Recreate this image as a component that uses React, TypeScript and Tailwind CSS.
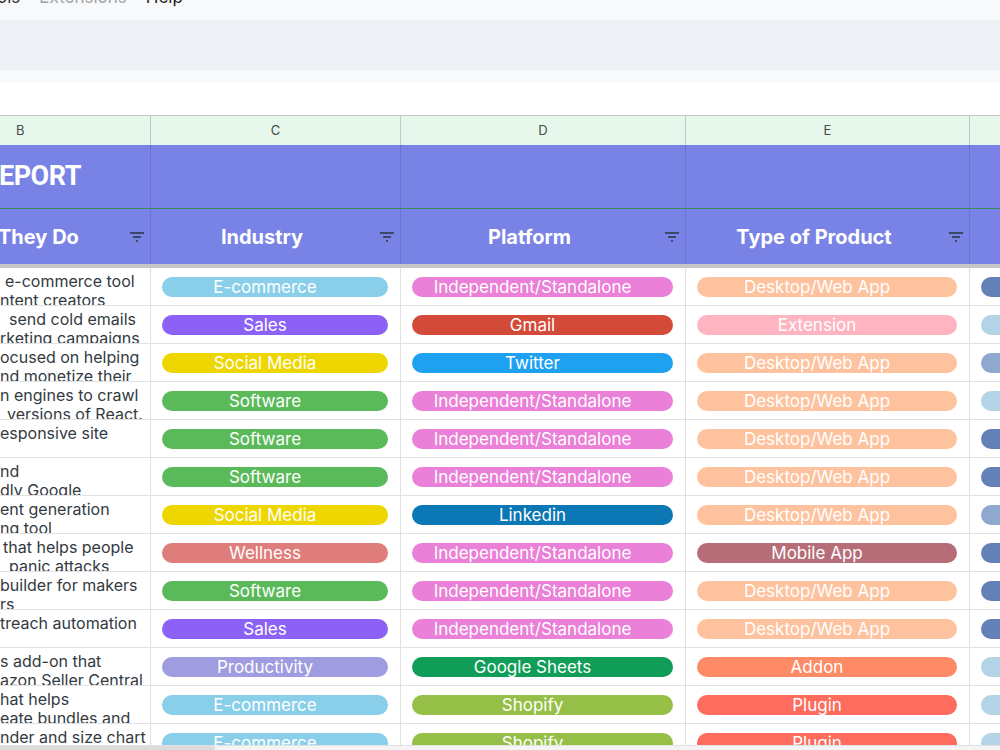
import React from "react";

type Row = {
  l1: string;
  m1: string;
  l2: string;
  m2: string;
  ind: [string, string];
  plat: [string, string];
  type: [string, string];
  f: string;
};

const ECOM: [string, string] = ["E-commerce", "bg-[#89cfea]"];
const SALES: [string, string] = ["Sales", "bg-[#8c62f6]"];
const SOCIAL: [string, string] = ["Social Media", "bg-[#eed600]"];
const SOFT: [string, string] = ["Software", "bg-[#5aba5a]"];
const WELL: [string, string] = ["Wellness", "bg-[#de7d7a]"];
const PROD: [string, string] = ["Productivity", "bg-[#a09ce0]"];

const INDEP: [string, string] = ["Independent/Standalone", "bg-[#ea80d7]"];
const GMAIL: [string, string] = ["Gmail", "bg-[#d34a39]"];
const TWIT: [string, string] = ["Twitter", "bg-[#1ea1f1]"];
const LINK: [string, string] = ["Linkedin", "bg-[#0b77b4]"];
const GSHEET: [string, string] = ["Google Sheets", "bg-[#0f9d58]"];
const SHOP: [string, string] = ["Shopify", "bg-[#96bf48]"];

const DESK: [string, string] = ["Desktop/Web App", "bg-[#fec39e]"];
const EXT: [string, string] = ["Extension", "bg-[#feb5c1]"];
const MOB: [string, string] = ["Mobile App", "bg-[#b66d78]"];
const ADD: [string, string] = ["Addon", "bg-[#fe8a66]"];
const PLUG: [string, string] = ["Plugin", "bg-[#fe6c5e]"];

const DARK = "bg-[#6481b7]";
const LIGHT = "bg-[#b3d4e6]";
const MID = "bg-[#8fa8cd]";

const rows: Row[] = [
  { l1: "e-commerce tool", m1: "ml-[5px]", l2: "ntent creators", m2: "ml-[0px]", ind: ECOM, plat: INDEP, type: DESK, f: DARK },
  { l1: "send cold emails", m1: "ml-[9px]", l2: "rketing campaigns", m2: "ml-[0px]", ind: SALES, plat: GMAIL, type: EXT, f: LIGHT },
  { l1: "ocused on helping", m1: "ml-[0px]", l2: "nd monetize their", m2: "ml-[0px]", ind: SOCIAL, plat: TWIT, type: DESK, f: MID },
  { l1: "n engines to crawl", m1: "ml-[0px]", l2: "versions of React.", m2: "ml-[7px]", ind: SOFT, plat: INDEP, type: DESK, f: LIGHT },
  { l1: "esponsive site", m1: "ml-[0px]", l2: "", m2: "ml-[0px]", ind: SOFT, plat: INDEP, type: DESK, f: DARK },
  { l1: "nd", m1: "ml-[0px]", l2: "dly Google", m2: "ml-[0px]", ind: SOFT, plat: INDEP, type: DESK, f: DARK },
  { l1: "ent generation", m1: "ml-[0px]", l2: "ng tool", m2: "ml-[0px]", ind: SOCIAL, plat: LINK, type: DESK, f: MID },
  { l1: "that helps people", m1: "ml-[3px]", l2: "panic attacks", m2: "ml-[9px]", ind: WELL, plat: INDEP, type: MOB, f: DARK },
  { l1: "builder for makers", m1: "ml-[0px]", l2: "rs", m2: "ml-[0px]", ind: SOFT, plat: INDEP, type: DESK, f: DARK },
  { l1: "treach automation", m1: "ml-[0px]", l2: "", m2: "ml-[0px]", ind: SALES, plat: INDEP, type: DESK, f: DARK },
  { l1: "s add-on that", m1: "ml-[0px]", l2: "azon Seller Central", m2: "ml-[0px]", ind: PROD, plat: GSHEET, type: ADD, f: LIGHT },
  { l1: "hat helps", m1: "ml-[0px]", l2: "eate bundles and", m2: "ml-[0px]", ind: ECOM, plat: SHOP, type: PLUG, f: LIGHT },
  { l1: "nder and size chart", m1: "ml-[0px]", l2: "", m2: "ml-[0px]", ind: ECOM, plat: SHOP, type: PLUG, f: LIGHT },
];

function FilterIcon() {
  return (
    <svg width="16" height="12" viewBox="0 0 16 12" className="shrink-0">
      <rect x="1" y="1" width="14" height="2" fill="#3d4866" />
      <rect x="4" y="5" width="8" height="2" fill="#3d4866" />
      <rect x="7" y="9" width="2" height="2" fill="#3d4866" />
    </svg>
  );
}

function Pill({ p }: { p: [string, string] }) {
  return (
    <div
      className={`flex-1 h-[20px] rounded-full ${p[1]} text-white text-[17px] leading-[20px] text-center whitespace-nowrap overflow-hidden pr-[20px]`}
    >
      {p[0]}
    </div>
  );
}

export default function App() {
  return (
    <div className="w-[1000px] h-[750px] overflow-hidden flex flex-col bg-white font-['Inter',sans-serif]">
      {/* menu bar */}
      <div className="h-[20px] shrink-0 bg-[#f8f9fa] overflow-hidden">
        <div className="flex -mt-[13px] text-[17px] leading-[20px] whitespace-nowrap">
          <span className="-ml-[3px] text-[#333]">ols</span>
          <span className="ml-[19px] text-[#a0a4a8]">Extensions</span>
          <span className="ml-[19px] text-[#222]">Help</span>
        </div>
      </div>
      {/* toolbar */}
      <div className="h-[50px] shrink-0 bg-[#eef2f7]" />
      <div className="h-[13px] shrink-0 bg-[#f8f9fb]" />
      <div className="h-[32px] shrink-0 bg-white" />

      {/* grid */}
      <div className="flex-1 overflow-hidden flex flex-col">
        {/* column letters */}
        <div className="flex h-[30px] shrink-0 border-t border-[#c6c6c6] bg-[#e6f7eb] text-[13px] text-[#4a4a4a]">
          <div className="w-[151px] shrink-0 border-r border-[#c6c6c6] flex items-center pl-[16px]">B</div>
          <div className="w-[250px] shrink-0 border-r border-[#c6c6c6] flex items-center justify-center">C</div>
          <div className="w-[285px] shrink-0 border-r border-[#c6c6c6] flex items-center justify-center">D</div>
          <div className="w-[284px] shrink-0 border-r border-[#c6c6c6] flex items-center justify-center">E</div>
          <div className="w-[300px] shrink-0" />
        </div>

        {/* title row */}
        <div className="flex h-[64px] shrink-0 bg-[#7983e6] border-b border-[#3a8d5c]">
          <div className="w-[151px] shrink-0 border-r border-[#6b74d4] flex items-center overflow-hidden">
            <span className="-ml-[1px] text-white font-bold text-[27px] tracking-[-0.5px] leading-none whitespace-nowrap font-['Roboto',sans-serif]">EPORT</span>
          </div>
          <div className="w-[250px] shrink-0 border-r border-[#6b74d4]" />
          <div className="w-[285px] shrink-0 border-r border-[#6b74d4]" />
          <div className="w-[284px] shrink-0 border-r border-[#6b74d4]" />
          <div className="w-[300px] shrink-0" />
        </div>

        {/* header row */}
        <div className="flex h-[59px] shrink-0 bg-[#7983e6] border-b-4 border-[#c6c6c6] text-white font-bold text-[20px]">
          <div className="w-[151px] shrink-0 border-r border-[#6b74d4] flex items-center pr-[5px] overflow-hidden">
            <span className="flex-1 whitespace-nowrap -ml-[2px]">They Do</span>
            <FilterIcon />
          </div>
          <div className="w-[250px] shrink-0 border-r border-[#6b74d4] flex items-center pr-[5px]">
            <span className="flex-1 text-center pr-[6px]">Industry</span>
            <FilterIcon />
          </div>
          <div className="w-[285px] shrink-0 border-r border-[#6b74d4] flex items-center pr-[5px]">
            <span className="flex-1 text-center pr-[6px]">Platform</span>
            <FilterIcon />
          </div>
          <div className="w-[284px] shrink-0 border-r border-[#6b74d4] flex items-center pr-[5px]">
            <span className="flex-1 text-center pr-[6px]">Type of Product</span>
            <FilterIcon />
          </div>
          <div className="w-[300px] shrink-0" />
        </div>

        {/* data rows */}
        {rows.map((r, i) => (
          <div key={i} className="flex h-[38px] shrink-0 border-b border-[#e2e2e2]">
            <div className="w-[151px] shrink-0 border-r border-[#e0e0e0] overflow-hidden pt-[4px] text-[16px] leading-[19px] text-[#333a42]">
              <div className={`whitespace-nowrap ${r.m1}`}>{r.l1}</div>
              <div className={`whitespace-nowrap ${r.m2}`}>{r.l2}</div>
            </div>
            <div className="w-[250px] shrink-0 border-r border-[#e0e0e0] flex items-center pl-[11px] pr-[12px]">
              <Pill p={r.ind} />
            </div>
            <div className="w-[285px] shrink-0 border-r border-[#e0e0e0] flex items-center pl-[11px] pr-[12px]">
              <Pill p={r.plat} />
            </div>
            <div className="w-[284px] shrink-0 border-r border-[#e0e0e0] flex items-center pl-[11px] pr-[12px]">
              <Pill p={r.type} />
            </div>
            <div className="w-[300px] shrink-0 flex items-center pl-[11px]">
              <div className={`w-[260px] h-[20px] rounded-full ${r.f}`} />
            </div>
          </div>
        ))}
      </div>

      {/* horizontal scrollbar */}
      <div className="h-[5px] shrink-0 bg-[#f4f4f4] border-t border-[#e2e2e2] flex">
        <div className="w-[215px] h-full bg-[#dcdcdc] rounded-r-full" />
      </div>
    </div>
  );
}
